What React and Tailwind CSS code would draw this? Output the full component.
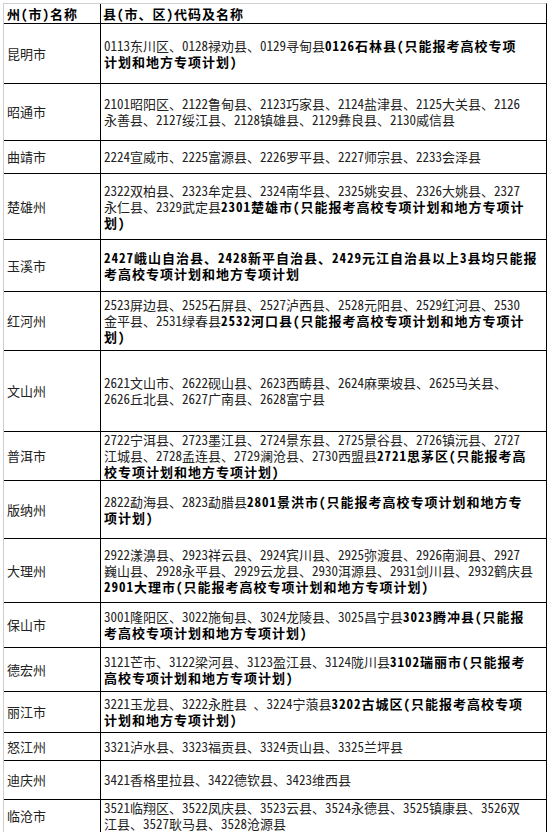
const rows = [
  {
    name: "昆明市",
    h: "h-[60px]",
    lines: [
      ["0113东川区、0128禄劝县、0129寻甸县", "0126石林县(只能报考高校专项"],
      ["", "计划和地方专项计划)"],
    ],
  },
  {
    name: "昭通市",
    h: "h-[57px]",
    lines: [
      ["2101昭阳区、2122鲁甸县、2123巧家县、2124盐津县、2125大关县、2126"],
      ["永善县、2127绥江县、2128镇雄县、2129彝良县、2130威信县"],
    ],
  },
  {
    name: "曲靖市",
    h: "h-[33px]",
    lines: [["2224宣威市、2225富源县、2226罗平县、2227师宗县、2233会泽县"]],
  },
  {
    name: "楚雄州",
    h: "h-[66px]",
    lines: [
      ["2322双柏县、2323牟定县、2324南华县、2325姚安县、2326大姚县、2327"],
      ["永仁县、2329武定县", "2301楚雄市(只能报考高校专项计划和地方专项计"],
      ["", "划)"],
    ],
  },
  {
    name: "玉溪市",
    h: "h-[52px]",
    lines: [
      ["", "2427峨山自治县、2428新平自治县、2429元江自治县以上3县均只能报"],
      ["", "考高校专项计划和地方专项计划"],
    ],
  },
  {
    name: "红河州",
    h: "h-[59px]",
    lines: [
      ["2523屏边县、2525石屏县、2527泸西县、2528元阳县、2529红河县、2530"],
      ["金平县、2531绿春县", "2532河口县(只能报考高校专项计划和地方专项计"],
      ["", "划)"],
    ],
  },
  {
    name: "文山州",
    h: "h-[81px]",
    lines: [
      ["2621文山市、2622砚山县、2623西畴县、2624麻栗坡县、2625马关县、"],
      ["2626丘北县、2627广南县、2628富宁县"],
    ],
  },
  {
    name: "普洱市",
    h: "h-[49px]",
    lines: [
      ["2722宁洱县、2723墨江县、2724景东县、2725景谷县、2726镇沅县、2727"],
      ["江城县、2728孟连县、2729澜沧县、2730西盟县", "2721思茅区(只能报考高"],
      ["", "校专项计划和地方专项计划)"],
    ],
  },
  {
    name: "版纳州",
    h: "h-[58px]",
    lines: [
      ["2822勐海县、2823勐腊县", "2801景洪市(只能报考高校专项计划和地方专"],
      ["", "项计划)"],
    ],
  },
  {
    name: "大理州",
    h: "h-[64px]",
    lines: [
      ["2922漾濞县、2923祥云县、2924宾川县、2925弥渡县、2926南涧县、2927"],
      ["巍山县、2928永平县、2929云龙县、2930洱源县、2931剑川县、2932鹤庆县"],
      ["", "2901大理市(只能报考高校专项计划和地方专项计划)"],
    ],
  },
  {
    name: "保山市",
    h: "h-[45px]",
    lines: [
      ["3001隆阳区、3022施甸县、3024龙陵县、3025昌宁县", "3023腾冲县(只能报"],
      ["", "考高校专项计划和地方专项计划)"],
    ],
  },
  {
    name: "德宏州",
    h: "h-[44px]",
    lines: [
      ["3121芒市、3122梁河县、3123盈江县、3124陇川县", "3102瑞丽市(只能报考"],
      ["", "高校专项计划和地方专项计划)"],
    ],
  },
  {
    name: "丽江市",
    h: "h-[41px]",
    lines: [
      ["3221玉龙县、3222永胜县 、3224宁蒗县", "3202古城区(只能报考高校专项"],
      ["", "计划和地方专项计划)"],
    ],
  },
  {
    name: "怒江州",
    h: "h-[28px]",
    lines: [["3321泸水县、3323福贡县、3324贡山县、3325兰坪县"]],
  },
  {
    name: "迪庆州",
    h: "h-[39px]",
    lines: [["3421香格里拉县、3422德钦县、3423维西县"]],
  },
  {
    name: "临沧市",
    h: "h-[32px]",
    lines: [
      ["3521临翔区、3522凤庆县、3523云县、3524永德县、3525镇康县、3526双"],
      ["江县、3527耿马县、3528沧源县"],
    ],
  },
];

function Line({ parts }) {
  const [plain, bold] = parts;
  return (
    <div className="whitespace-nowrap">
      {plain}
      {bold && <span className="font-bold tracking-[1px] text-black">{bold}</span>}
    </div>
  );
}

export default function App() {
  return (
    <div className="min-h-screen bg-white pt-[3px] pl-[3px] font-['Noto_Sans_CJK_SC',sans-serif] text-[13px] leading-[16px] text-[#222] [font-feature-settings:'hwid']">
      <div className="w-[544px] border-t border-l border-r border-t-[#cfcfcf] border-l-[#cfcfcf] border-r-black">
        {/* header */}
        <div className="flex h-[20px] border-b border-black font-bold tracking-[1px] text-black">
          <div className="flex w-[97px] shrink-0 items-center border-r border-black pl-[3px]">
            州(市)名称
          </div>
          <div className="flex items-center pl-[2px]">县(市、区)代码及名称</div>
        </div>

        {rows.map((r, i) => (
          <div
            key={r.name}
            className={`flex ${r.h} ${i < rows.length - 1 ? "border-b border-black" : ""}`}
          >
            <div className="flex w-[97px] shrink-0 items-center border-r border-black pl-[3px]">
              {r.name}
            </div>
            <div className="flex flex-col justify-center pl-[3px]">
              {r.lines.map((l, j) => (
                <Line key={j} parts={l} />
              ))}
            </div>
          </div>
        ))}
      </div>
    </div>
  );
}
